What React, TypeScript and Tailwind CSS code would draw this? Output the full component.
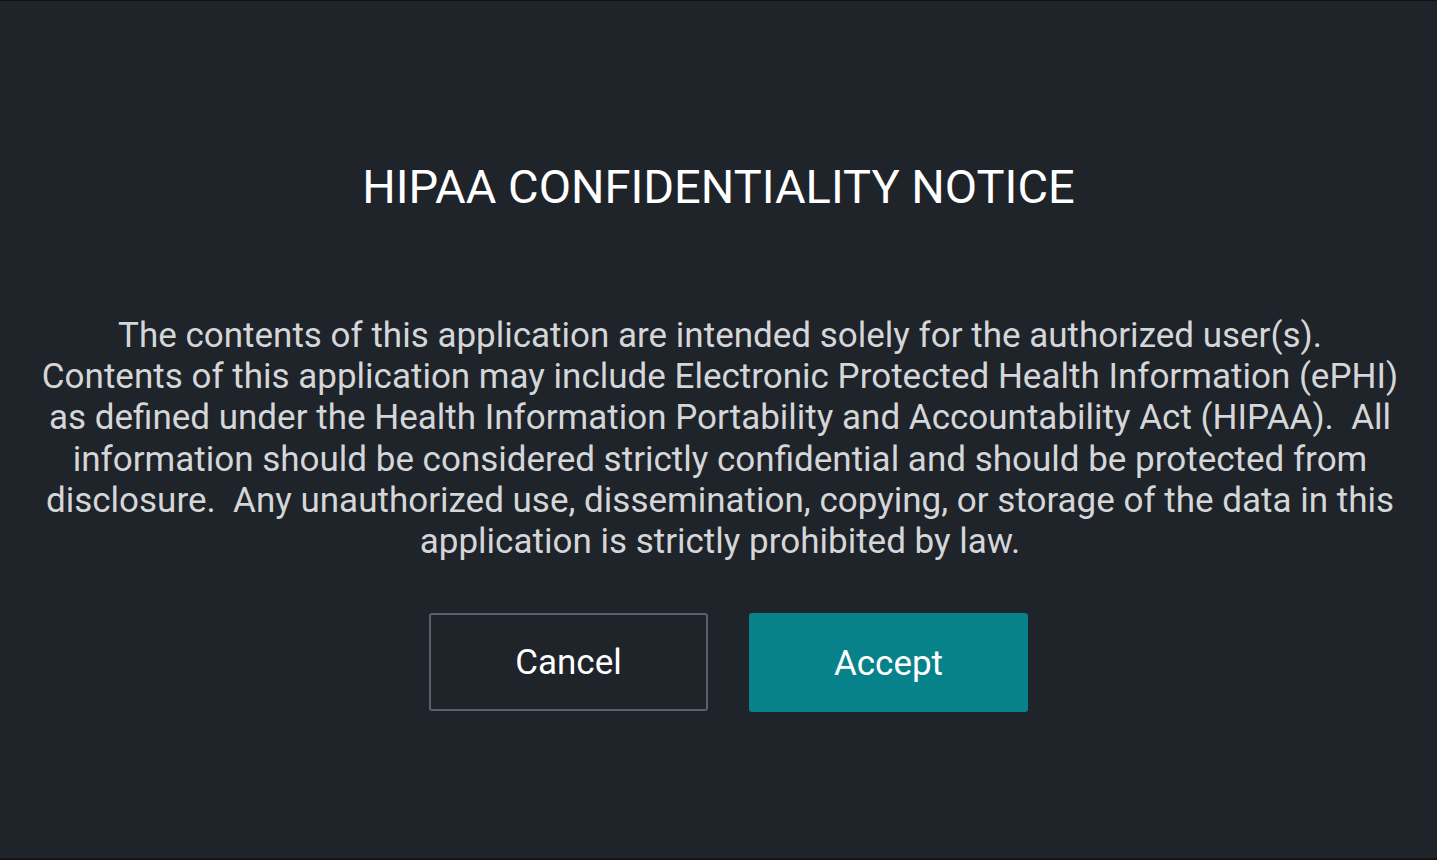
export default function App() {
  return (
    <div className="flex h-[860px] w-full flex-col items-center border-t border-t-[#0f1215] border-b-2 border-b-[#111418] bg-[#1f232a] font-['Roboto',sans-serif]">
      <h1 className="mt-[158px] text-[47px] leading-[56px] text-white">
        HIPAA CONFIDENTIALITY NOTICE
      </h1>
      <p className="mt-[100px] pl-[3px] whitespace-pre text-center text-[35px] leading-[41.2px] text-[#d4d6d8]">
        {"The contents of this application are intended solely for the authorized user(s).\nContents of this application may include Electronic Protected Health Information (ePHI)\nas defined under the Health Information Portability and Accountability Act (HIPAA).\u00a0 All\ninformation should be considered strictly confidential and should be protected from\ndisclosure.\u00a0 Any unauthorized use, dissemination, copying, or storage of the data in this\napplication is strictly prohibited by law."}
      </p>
      <div className="mt-[51px] flex gap-[41px] pl-[20px]">
        <button className="h-[98px] w-[279px] rounded-[3px] border-2 border-[#56636b] bg-transparent pt-[3px] text-[35px] text-white">
          Cancel
        </button>
        <button className="h-[99px] w-[279px] rounded-[3px] bg-[#08828a] pt-[3px] text-[35px] text-white">
          Accept
        </button>
      </div>
    </div>
  )
}
